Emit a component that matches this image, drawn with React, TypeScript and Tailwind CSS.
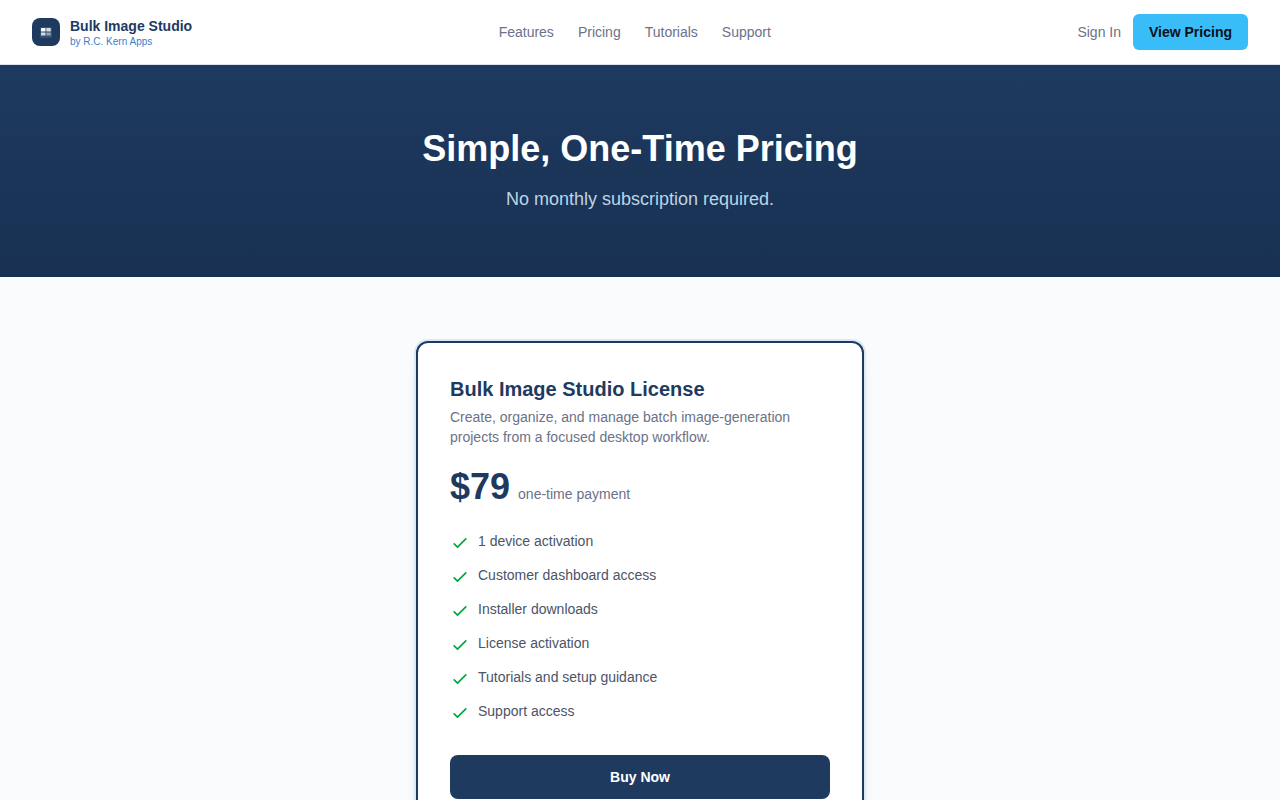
const links = ["Features", "Pricing", "Tutorials", "Support"];

const features = [
  "1 device activation",
  "Customer dashboard access",
  "Installer downloads",
  "License activation",
  "Tutorials and setup guidance",
  "Support access",
];

function Logo() {
  return (
    <svg className="size-7 shrink-0" viewBox="0 0 28 28" aria-hidden="true">
      <rect width="28" height="28" rx="8" fill="#1e3a5f" />
      <rect x="8" y="9" width="12" height="11" rx="1" fill="#33506f" />
      <rect x="9" y="10" width="4.5" height="3.4" rx="0.4" fill="#f8fafc" />
      <rect x="14.3" y="10" width="4.5" height="3.4" rx="0.4" fill="#d3dce6" />
      <rect x="9" y="14.6" width="4.5" height="3" rx="0.4" fill="#d3dce6" />
      <rect x="14.3" y="14.6" width="4.5" height="3" rx="0.4" fill="#93a4b8" />
    </svg>
  );
}

function Check() {
  return (
    <svg
      className="mt-0.5 size-5 shrink-0 text-[#00a63e]"
      viewBox="0 0 24 24"
      fill="none"
      stroke="currentColor"
      strokeWidth="2"
      strokeLinecap="round"
      strokeLinejoin="round"
      aria-hidden="true"
    >
      <path d="M5 13l4 4L19 7" />
    </svg>
  );
}

function Header() {
  return (
    <header className="border-b border-[#dde5ee] bg-white">
      <div className="mx-auto flex h-16 max-w-7xl items-center justify-between px-8">
        <a href="#home" className="flex items-center gap-2.5">
          <Logo />
          <span className="flex flex-col">
            <span className="text-sm leading-5 font-bold text-[#1e3a5f]">Bulk Image Studio</span>
            <span className="text-[10px] leading-3 text-[#3b7dcb]">by R.C. Kern Apps</span>
          </span>
        </a>
        <nav className="flex items-center gap-6 text-sm text-[#6b7289]">
          {links.map((link) => (
            <a key={link} href={`#${link.toLowerCase()}`}>
              {link}
            </a>
          ))}
        </nav>
        <div className="flex items-center gap-3 text-sm">
          <a href="#sign-in" className="text-[#6b7289]">
            Sign In
          </a>
          <a href="#pricing" className="rounded-md bg-[#38bdf8] px-4 py-2 font-bold text-[#0a0f1a]">
            View Pricing
          </a>
        </div>
      </div>
    </header>
  );
}

export default function App() {
  return (
    <div className="min-h-screen bg-[#f9fbfd] font-['Liberation_Sans',Arial,sans-serif]">
      <Header />
      <main>
        <section className="bg-linear-to-b from-[#1e3a5f] to-[#183153] px-8 py-16 text-center">
          <h1 className="mb-4 text-4xl font-bold text-white">Simple, One-Time Pricing</h1>
          <p className="text-lg text-[#bcd4e6]">No monthly subscription required.</p>
        </section>
        <section id="pricing" className="px-4 py-16">
          <div className="mx-auto max-w-md rounded-xl border-2 border-[#1e3a5f] bg-white p-8 shadow-lg ring-2 ring-[#dbe9f6]">
            <h2 className="text-xl font-bold text-[#1e3a5f]">Bulk Image Studio License</h2>
            <p className="mt-1 text-sm text-[#6b7289]">
              Create, organize, and manage batch image-generation projects from a focused desktop workflow.
            </p>
            <p className="mt-5 flex items-baseline gap-2">
              <span className="text-4xl font-bold text-[#1e3a5f]">$79</span>
              <span className="text-sm text-[#6b7289]">one-time payment</span>
            </p>
            <ul className="mt-6 flex flex-col gap-3">
              {features.map((feature) => (
                <li key={feature} className="flex items-start gap-2 text-sm text-[#4b5468]">
                  <Check />
                  <span>{feature}</span>
                </li>
              ))}
            </ul>
            <button type="button" className="mt-8 w-full rounded-lg bg-[#1e3a5f] py-3 text-sm font-bold text-white">
              Buy Now
            </button>
          </div>
        </section>
      </main>
    </div>
  );
}
